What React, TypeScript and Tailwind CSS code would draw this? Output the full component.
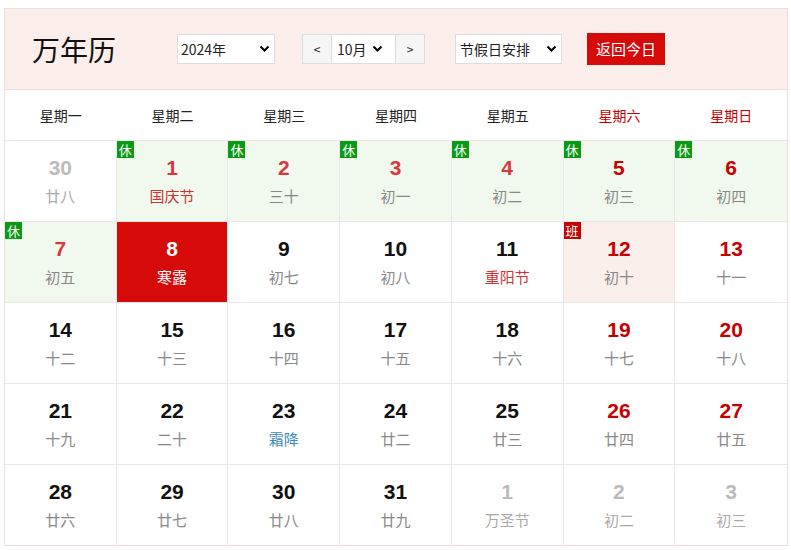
import React from "react";

type C = { d: string; l: string; dim?: boolean; rest?: boolean; work?: boolean; today?: boolean; wk?: boolean; lc?: string };
const rows: C[][] = [
  [{ d: "30", l: "廿八", dim: true }, { d: "1", l: "国庆节", rest: true, lc: "text-[#c33]" }, { d: "2", l: "三十", rest: true }, { d: "3", l: "初一", rest: true }, { d: "4", l: "初二", rest: true }, { d: "5", l: "初三", rest: true, wk: true }, { d: "6", l: "初四", rest: true, wk: true }],
  [{ d: "7", l: "初五", rest: true }, { d: "8", l: "寒露", today: true }, { d: "9", l: "初七" }, { d: "10", l: "初八" }, { d: "11", l: "重阳节", lc: "text-[#c33]" }, { d: "12", l: "初十", work: true, wk: true }, { d: "13", l: "十一", wk: true }],
  [{ d: "14", l: "十二" }, { d: "15", l: "十三" }, { d: "16", l: "十四" }, { d: "17", l: "十五" }, { d: "18", l: "十六" }, { d: "19", l: "十七", wk: true }, { d: "20", l: "十八", wk: true }],
  [{ d: "21", l: "十九" }, { d: "22", l: "二十" }, { d: "23", l: "霜降", lc: "text-[#3a8ac0]" }, { d: "24", l: "廿二" }, { d: "25", l: "廿三" }, { d: "26", l: "廿四", wk: true }, { d: "27", l: "廿五", wk: true }],
  [{ d: "28", l: "廿六" }, { d: "29", l: "廿七" }, { d: "30", l: "廿八" }, { d: "31", l: "廿九" }, { d: "1", l: "万圣节", dim: true }, { d: "2", l: "初二", dim: true }, { d: "3", l: "初三", dim: true }],
];
const days = ["星期一", "星期二", "星期三", "星期四", "星期五", "星期六", "星期日"];
const Chev = () => (
  <svg width="11" height="8" viewBox="0 0 11 8"><path d="M1.5 1.5 L5.5 5.5 L9.5 1.5" stroke="#000" strokeWidth="2" fill="none" /></svg>
);

export default function App() {
  return (
    <div className="w-[791px] h-[550px] bg-white pt-2 pl-1" style={{ fontFamily: '"Microsoft YaHei","Noto Sans CJK SC",sans-serif' }}>
      <div className="w-[784px] border border-[#f0dcd8]">
        <div className="h-[80px] bg-[#fbeeeb] flex items-center text-[14px] text-[#222]">
          <div className="ml-[27px] text-[28px] w-[145px] text-[#111]">万年历</div>
          <div className="w-[98px] h-[30px] bg-white border border-[#ddd] flex items-center justify-between px-[3px] pr-[4px]">2024年<Chev /></div>
          <div className="ml-[27px] h-[30px] flex border border-[#ddd] bg-white">
            <div className="w-[29px] bg-[#f6f6f6] flex items-center justify-center text-[12px] border-r border-[#ddd]">&lt;</div>
            <div className="w-[63px] flex items-center gap-[5px] pl-[5px]">10月<Chev /></div>
            <div className="w-[29px] bg-[#f6f6f6] flex items-center justify-center text-[12px] border-l border-[#ddd]">&gt;</div>
          </div>
          <div className="ml-[30px] w-[107px] h-[30px] bg-white border border-[#ddd] flex items-center justify-between px-[4px]">节假日安排<Chev /></div>
          <div className="ml-[25px] w-[78px] h-[32px] bg-[#d70a0a] text-white flex items-center justify-center text-[15px]">返回今日</div>
        </div>
        <div className="grid grid-cols-7 h-[51px] border-t border-[#f0dcd8] text-[14px]">
          {days.map((d, i) => (
            <div key={d} className={`flex items-center justify-center ${i >= 5 ? "text-[#c40000]" : "text-[#222]"}`}>{d}</div>
          ))}
        </div>
        {rows.map((r, ri) => (
          <div key={ri} className="grid grid-cols-7 h-[81px] border-t border-[#e8e8e8]">
            {r.map((c, ci) => {
              const bg = c.today ? "bg-[#d70a0a]" : c.rest ? "bg-[#f1f9ee]" : c.work ? "bg-[#fbefec]" : "bg-white";
              const num = c.today ? "text-white" : c.dim ? "text-[#bbb]" : c.rest && !c.wk ? "text-[#d9363e]" : c.wk || c.rest ? "text-[#c80000]" : "text-[#111]";
              const lun = c.today ? "text-white" : c.dim ? "text-[#aaa]" : c.lc ?? "text-[#888]";
              return (
                <div key={ci} className={`relative flex flex-col items-center pt-[14px] ${bg} ${ci < 6 ? "border-r border-[#e8e8e8]" : ""}`}>
                  {(c.rest || c.work) && (
                    <div className={`absolute left-0 top-0 w-[17px] h-[17px] text-[13px] leading-[17px] text-white text-center ${c.rest ? "bg-[#0b9a14]" : "bg-[#c80000]"}`}>{c.rest ? "休" : "班"}</div>
                  )}
                  <div className={`text-[21px] font-bold leading-[26px] ${num}`} style={{ fontFamily: 'Arial,"Liberation Sans",sans-serif' }}>{c.d}</div>
                  <div className={`text-[15px] mt-[5px] leading-[20px] ${lun}`}>{c.l}</div>
                </div>
              );
            })}
          </div>
        ))}
      </div>
    </div>
  );
}
